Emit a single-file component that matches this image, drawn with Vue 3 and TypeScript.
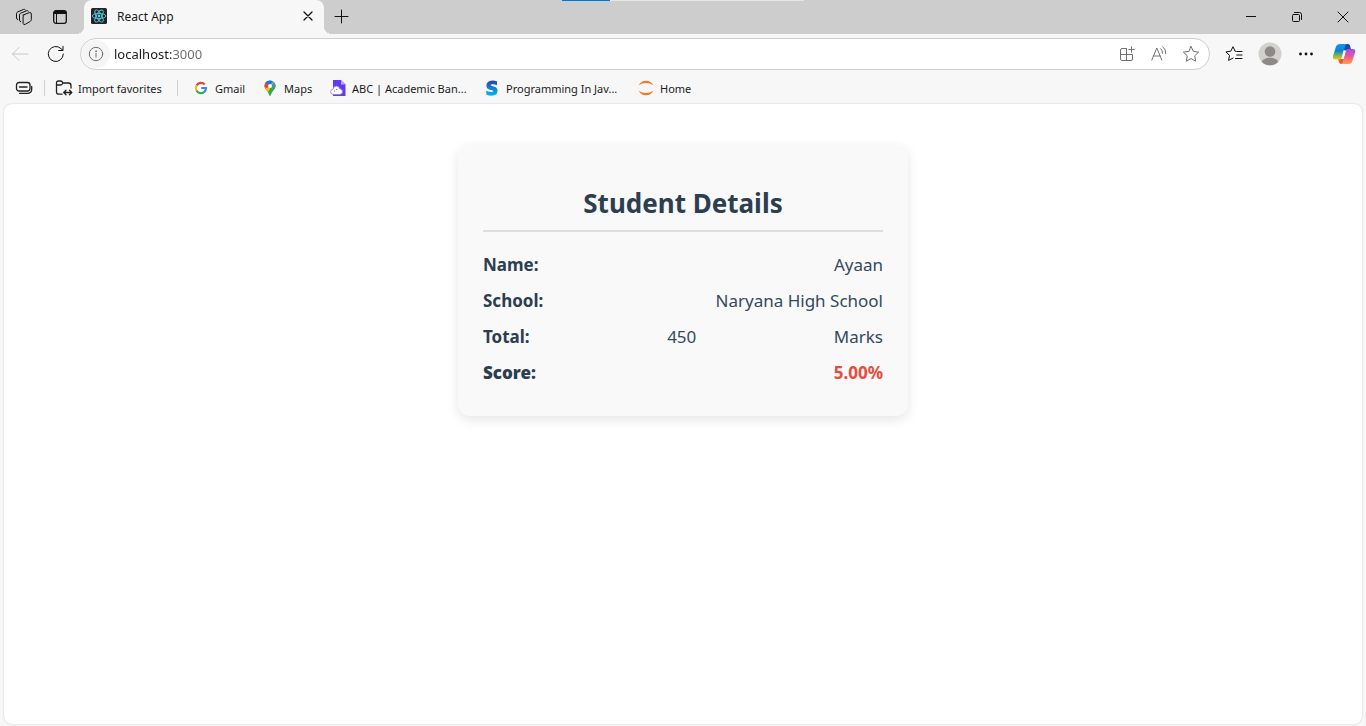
<script setup lang="ts">
import { ref } from 'vue'

interface Detail {
  label: string
  values: string[]
  score?: boolean
}

const address = ref('localhost:3000')
const details: Detail[] = [
  { label: 'Name:', values: ['Ayaan'] },
  { label: 'School:', values: ['Naryana High School'] },
  { label: 'Total:', values: ['450', 'Marks'] },
  { label: 'Score:', values: ['5.00%'], score: true },
]
</script>

<template>
  <div class="browser">
    <header class="tabstrip">
      <div class="loader" role="progressbar" aria-label="Loading"><span></span></div>
      <button class="tool" aria-label="Workspaces">
        <svg width="18" height="18" viewBox="0 0 18 18" class="line dark">
          <path d="M7.9 7.1 14.4 4.6q1.9-.5 1.9 1.4v5.6q0 1.2-1 1.8l-5 2.9q-1.9.9-2.2-.9V8.8q0-1.200 1-1.700" />
          <path d="M5.700 13.700q-1.100-.1-1.200-1.500V7.100q0-1.300 1.100-1.900l6.200-2.500q1-.3 1.500.4" />
          <path d="M2.700 11.500q-1.100-.2-1.200-1.400V5.700q0-1.200 1-1.700L8.600 1.400q1-.4 1.700.4" />
        </svg>
      </button>
      <button class="tool" aria-label="Tab actions">
        <svg width="16" height="16" viewBox="0 0 16 16">
          <rect x="1.700" y="1.700" width="12.600" height="12.600" rx="2.200" fill="none" stroke="#111" stroke-width="1.300" />
          <path d="M1.700 5V4q0-2.300 2.300-2.300h8q2.300 0 2.300 2.300v1z" fill="#111" />
          <path d="M4.500 5v9" stroke="#111" stroke-width="1" />
        </svg>
      </button>
      <div class="tab">
        <svg width="16" height="16" viewBox="0 0 16 16">
          <rect width="16" height="16" rx="1.500" fill="#222426" />
          <g fill="none" stroke="#58c4dc" stroke-width=".9">
            <ellipse cx="8" cy="8" rx="6.800" ry="2.600" />
            <ellipse cx="8" cy="8" rx="6.800" ry="2.600" transform="rotate(60 8 8)" />
            <ellipse cx="8" cy="8" rx="6.800" ry="2.600" transform="rotate(120 8 8)" />
          </g>
          <circle cx="8" cy="8" r="1.400" fill="#58c4dc" />
        </svg>
        <span class="tab-title">React App</span>
        <button class="close" aria-label="Close tab">
          <svg width="10" height="10" viewBox="0 0 10 10" class="line dark cross"><path d="m1 1 8 8m0-8-8 8" /></svg>
        </button>
      </div>
      <button class="tool" aria-label="New tab">
        <svg width="16" height="16" viewBox="0 0 16 16" class="line dark"><path d="M7.500 1v13M1 7.500h13" /></svg>
      </button>
      <div class="window-buttons">
        <button aria-label="Minimize">
          <svg width="10" height="10" viewBox="0 0 10 10" class="line dark"><path d="M0 4.500h10" /></svg>
        </button>
        <button aria-label="Restore">
          <svg width="12" height="12" viewBox="0 0 12 12" class="line dark">
            <rect x="1.500" y="3.500" width="7" height="7" rx="1" />
            <path d="M3.500 1.500h5q2 0 2 2v5" />
          </svg>
        </button>
        <button aria-label="Close">
          <svg width="12" height="12" viewBox="0 0 12 12" class="line dark"><path d="m1 1 10 10m0-10L1 11" /></svg>
        </button>
      </div>
    </header>

    <div class="toolbar">
      <button class="tool" aria-label="Back">
        <svg width="18" height="16" viewBox="0 0 18 16" class="line faint"><path d="M17 8H1.500m6.500-6.500L1.500 8 8 14.500" /></svg>
      </button>
      <button class="tool" aria-label="Refresh">
        <svg width="18" height="18" viewBox="0 0 18 18" class="line dark"><path d="M16.300 9A7.500 7.500 0 1 1 14 3.600l1.800 1.700M16 1.300v4.200h-4.300" /></svg>
      </button>
      <div class="address">
        <button class="info" aria-label="View site information">
          <svg width="16" height="16" viewBox="0 0 16 16" class="line gray">
            <circle cx="8" cy="8" r="6.700" />
            <path d="M8 7.200v4" />
            <circle cx="8" cy="5.200" r=".4" />
          </svg>
        </button>
        <input v-model="address" type="text" aria-label="Address and search bar" spellcheck="false" />
        <button class="action" aria-label="Apps">
          <svg width="16" height="16" viewBox="0 0 16 16" class="line gray">
            <path d="M7.500 2.500H3q-1.500 0-1.500 1.500v9Q1.500 14.500 3 14.500h9q1.500 0 1.500-1.500V8.500h-12M7.500 2.500v12M12.500 .8v5.400M9.800 3.500h5.400" />
          </svg>
        </button>
        <button class="action" aria-label="Read aloud">
          <svg width="16" height="16" viewBox="0 0 16 16" class="line gray">
            <path d="M.8 14 5.800 2 10.800 14M2.600 10h6.400M9.800 2.800q1.900 1.700 1.700 4.500M11.800.8q3.500 2.700 3 7" />
          </svg>
        </button>
        <button class="action" aria-label="Add to favorites">
          <svg width="18" height="18" viewBox="0 0 18 18" class="line gray">
            <path d="m9 1.500 2.300 4.900 5.300.7-3.900 3.700 1 5.400L9 13.600l-4.700 2.600 1-5.400-3.900-3.700 5.300-.7z" />
          </svg>
        </button>
      </div>
      <button class="tool" aria-label="Favorites">
        <svg width="18" height="18" viewBox="0 0 18 18" class="line dark">
          <path d="M11.700 6.500H17M11.700 10H17M10.500 13.500H17M9.800 5.500 8 1.700 5.800 6.200l-4.900.7L4.500 10.400l-.9 5 4.400-2.300M9.800 5.500l.6 1" />
        </svg>
      </button>
      <button class="tool" aria-label="Profile">
        <svg width="24" height="24" viewBox="0 0 24 24">
          <defs><clipPath id="avatar"><circle cx="12" cy="12" r="11.300" /></clipPath></defs>
          <circle cx="12" cy="12" r="11.500" fill="#d3d1ce" />
          <g fill="#8d8985" clip-path="url(#avatar)">
            <circle cx="12" cy="9.500" r="5.300" />
            <ellipse cx="12" cy="20.500" rx="8.300" ry="4.700" />
          </g>
        </svg>
      </button>
      <button class="tool" aria-label="Settings and more">
        <svg width="14" height="4" viewBox="0 0 14 4" fill="#111">
          <circle cx="1.500" cy="2" r="1.400" /><circle cx="7" cy="2" r="1.400" /><circle cx="12.500" cy="2" r="1.400" />
        </svg>
      </button>
      <button class="tool copilot" aria-label="Copilot">
        <svg width="24" height="22" viewBox="0 0 24 22">
          <defs>
            <linearGradient id="cool" x1="0" y1="0" x2="0" y2="1">
              <stop offset="0" stop-color="#1497ee" /><stop offset=".45" stop-color="#0f83d3" />
              <stop offset=".7" stop-color="#65b85a" /><stop offset="1" stop-color="#f2c512" />
            </linearGradient>
            <linearGradient id="warm" x1="0" y1="0" x2="0" y2="1">
              <stop offset="0" stop-color="#a04bea" /><stop offset=".5" stop-color="#ed5a91" />
              <stop offset="1" stop-color="#ffa245" />
            </linearGradient>
          </defs>
          <path d="M13 1h3q1.500 0 2 1.500l1 4h-3q-2 0-3 2L11 5z" fill="#1746b5" />
          <path d="M6 16h6l-1 4q-.5 1-2 1-1.500 0-2-2z" fill="#ee5631" />
          <path d="M7.500 1H15q-1.500.5-2 2.500L10.200 14q-.7 2.500-3 2.500H3.500Q.3 16.500 1 13L4 3.500Q4.800 1 7.500 1z" fill="url(#cool)" />
          <path d="M16.500 6h4Q24 6 23.200 9l-3 9.500Q19.500 21 17 21H9q1.500-.5 2-2.500L13.800 8q.6-2 2.700-2z" fill="url(#warm)" />
          <path d="M11.500 7.500h2.300L11.300 16H9.500z" fill="#f7f7f7" />
        </svg>
      </button>
    </div>

    <nav class="bookmarks" aria-label="Favorites bar">
      <button class="tool" aria-label="Saved tabs">
        <svg width="18" height="14" viewBox="0 0 18 14" class="line bold">
          <rect x="1.500" y="1.500" width="13.500" height="8.500" rx="2.500" />
          <path d="M4.500 6H12M4.500 12.300H13q3.700-.2 3.700-4V5.500" />
        </svg>
      </button>
      <span class="rule"></span>
      <a class="bookmark import" href="#import">
        <svg width="18" height="16" viewBox="0 0 18 16" class="line bold">
          <path d="M7 14.200H4Q1.500 14.200 1.500 12V3Q1.500 1 3.500 1h2.200Q7 1 8 3h5.500q2.500 0 2.500 2.500V8M1.500 5h4.200Q7 5 8 3M9 12.500h7.500M11 10.200l-2.300 2.300 2.300 2.300M14.500 10.200l2.300 2.300-2.300 2.300" />
        </svg>
        Import favorites
      </a>
      <span class="rule"></span>
      <div class="links">
        <a class="bookmark" href="#gmail">
          <svg width="16" height="16" viewBox="0 0 16 16">
            <circle cx="8" cy="8" r="8" fill="#fff" />
            <g fill="none" stroke-width="2.200">
              <path d="M3.500 5.500A5 5 0 0 1 11.700 4.500" stroke="#ea4335" />
              <path d="M3.500 5.500a5.200 5.200 0 0 0 0 5" stroke="#fbbc05" />
              <path d="M3.500 10.500a5 5 0 0 0 8 1.300" stroke="#34a853" />
              <path d="M8.200 8H13q0 2.400-1.700 4" stroke="#4285f4" />
            </g>
          </svg>
          Gmail
        </a>
        <a class="bookmark" href="#maps">
          <svg width="16" height="16" viewBox="0 0 16 16">
            <defs><clipPath id="pin"><path d="M8 .5a5.500 5.500 0 0 1 5.500 5.500c0 3-3.500 4.500-4.500 8.500Q8.700 15.800 8 15.800T7 14.500C6 10.500 2.500 9 2.500 6A5.500 5.500 0 0 1 8 .5z" /></clipPath></defs>
            <g clip-path="url(#pin)">
              <path d="M0 0h16v16H0z" fill="#34a853" />
              <path d="M0 11 14 0h2v4L6 13z" fill="#fbbc04" />
              <path d="M8 6 14 0h2v6L8 12z" fill="#4a8cf0" />
              <path d="M8 6 11 0H0l4 4z" fill="#1a73e8" />
              <path d="M4 2.500 8 6 4.500 10 0 8V4z" fill="#ea4335" />
              <path d="M2 7.500 5 8l3-2v4l-3 3z" fill="#fbbc04" />
              <path d="M8 9 13.500 4v5L8 16 6 12z" fill="#34a853" />
            </g>
            <circle cx="8" cy="6" r="2" fill="#fff" />
          </svg>
          Maps
        </a>
        <a class="bookmark" href="#abc">
          <svg width="16" height="16" viewBox="0 0 16 16">
            <path d="M3 0h8l4.500 4.500V16H3z" fill="#623bed" />
            <path d="m11 0 4.500 4.500H11z" fill="#b8a6fa" />
            <path d="M3.500 14.500Q.6 14.300.6 11.800.7 9.500 3 9.200 3.400 6 6.500 6q2.700.1 3.300 2.800 2.700.2 2.700 2.900-.1 2.700-3 2.800z" fill="#fff" stroke="#8e75f3" stroke-width=".8" />
            <path d="M4.500 11.500v-1M6.500 10V9" fill="none" stroke="#623bed" stroke-width=".8" />
          </svg>
          ABC | Academic Ban...
        </a>
        <a class="bookmark" href="#programming">
          <svg width="16" height="16" viewBox="0 0 16 16">
            <defs><linearGradient id="wave" x1="0" y1="0" x2="0" y2="1"><stop offset="0" stop-color="#2547a5" /><stop offset="1" stop-color="#00b8f0" /></linearGradient></defs>
            <path d="M13 1.500v3.700Q10.500 4 8 4.200q-2 .3-1 1.300.6.500 2.500.9 4 .9 4 4.300 0 4.800-6 5-3 0-5.200-1.200v-3.800Q5 12.200 8 12.100q2-.3 1-1.300Q8.500 10.300 6.500 10 2.300 9 2.400 5.500 2.500.6 8.500.4q2.500 0 4.500 1.100z" fill="url(#wave)" />
          </svg>
          Programming In Jav...
        </a>
        <a class="bookmark" href="#home">
          <svg width="16" height="16" viewBox="0 0 16 16" fill="#f37726">
            <path d="M.8 5.200Q3 .7 8 .7t7.200 4.500Q12.200 2.900 8 2.900T.8 5.200zM.8 10.800Q3 15.300 8 15.300t7.200-4.500Q12.200 13.100 8 13.100T.8 10.800z" />
          </svg>
          Home
        </a>
      </div>
    </nav>

    <main class="page">
      <section class="card">
        <h1>Student Details</h1>
        <dl>
          <div v-for="detail in details" :key="detail.label" class="row" :class="{ score: detail.score }">
            <dt>{{ detail.label }}</dt>
            <dd v-for="value in detail.values" :key="value">{{ value }}</dd>
          </div>
        </dl>
      </section>
    </main>
  </div>
</template>

<style>
body {
  margin: 0;
  background: #f7f7f7;
}
</style>

<style scoped>
.browser {
  display: flex;
  flex-direction: column;
  box-sizing: border-box;
  min-height: 100vh;
  padding-bottom: 2px;
  background: #f7f7f7;
  color: #1b1b1b;
  font-family: "Noto Sans", "Open Sans", sans-serif;
  font-size: 12px;
}

button {
  display: flex;
  align-items: center;
  justify-content: center;
  padding: 0;
  border: 0;
  background: none;
}

svg {
  display: block;
  flex: none;
}

.line {
  fill: none;
  stroke-width: 1;
  stroke-linecap: round;
  stroke-linejoin: round;
}

.dark { stroke: #111; }
.bold { stroke: #222; stroke-width: 1.3; }
.cross { stroke-width: 1.3; }
.gray { stroke: #707070; }
.faint { stroke: #c9c9c9; }

.tool {
  flex: none;
  width: 36px;
  height: 32px;
}

.tabstrip {
  position: relative;
  display: flex;
  align-items: center;
  height: 34px;
  padding-left: 6px;
  background: #cdcdcd;
}

.loader {
  position: absolute;
  top: 0;
  left: 50%;
  width: 242px;
  height: 1px;
  transform: translateX(-50%);
  background: #e6e6e6;
}

.loader span {
  display: block;
  width: 20%;
  height: 1px;
  background: #0078d4;
}

.tab {
  position: relative;
  display: flex;
  align-items: center;
  box-sizing: border-box;
  width: 240px;
  height: 34px;
  margin-left: 6px;
  padding: 0 6px 2px 7px;
  border-radius: 8px 8px 0 0;
  background: #f7f7f7;
}

.tab::before,
.tab::after {
  content: "";
  position: absolute;
  bottom: 0;
  width: 8px;
  height: 8px;
}

.tab::before {
  right: 100%;
  background: radial-gradient(circle at 0 0, #cdcdcd 8px, #f7f7f7 8px);
}

.tab::after {
  left: 100%;
  background: radial-gradient(circle at 100% 0, #cdcdcd 8px, #f7f7f7 8px);
}

.tab-title {
  flex: 1;
  margin-left: 10px;
}

.close {
  width: 20px;
  height: 20px;
}

.window-buttons {
  display: flex;
  margin-left: auto;
}

.window-buttons button {
  width: 46px;
  height: 34px;
}

.toolbar {
  display: flex;
  align-items: center;
  height: 40px;
  padding: 0 4px 0 2px;
}

.address {
  display: flex;
  flex: 1;
  align-items: center;
  box-sizing: border-box;
  height: 32px;
  margin: 0 6px;
  padding: 0 2px 0 1px;
  border: 1px solid #cecece;
  border-radius: 16px;
  background: #fff;
}

.info {
  width: 28px;
  height: 28px;
  border-radius: 50%;
  background: #f5f5f5;
}

.address input {
  flex: 1;
  min-width: 0;
  height: 28px;
  margin-left: 4px;
  padding: 0;
  border: 0;
  outline: 0;
  background: linear-gradient(90deg, #1b1b1b 57px, #6b6b6b 57px);
  background-clip: text;
  color: transparent;
  font: inherit;
  font-size: 13px;
}

.action {
  width: 32px;
  height: 28px;
}

.copilot {
  margin-left: 2px;
}

.bookmarks {
  display: flex;
  align-items: center;
  box-sizing: border-box;
  height: 30px;
  padding: 0 6px 2px;
  font-size: 11px;
}

.rule {
  width: 1px;
  height: 16px;
  margin: 0 10px 0 2px;
  background: #d0d0d0;
}

.bookmark {
  display: flex;
  align-items: center;
  gap: 6px;
  color: inherit;
  text-decoration: none;
  white-space: nowrap;
}

.import {
  width: 120px;
  gap: 5px;
}

.links {
  display: grid;
  grid-template-columns: 69px 68px 154px 154px auto;
  margin-left: 5px;
}

.page {
  flex: 1;
  margin: 0 4px;
  padding: 40px 16px;
  border-radius: 8px;
  background: #fff;
  box-shadow: 0 0 2px #0003;
}

.card {
  box-sizing: border-box;
  max-width: 450px;
  margin: 0 auto;
  padding: 40px 25px 25px;
  border-radius: 12px;
  background: #f9f9f9;
  box-shadow: 0 4px 12px #0000001a;
  color: #2c3e50;
  font-size: 17px;
}

h1 {
  margin: 0 0 15px;
  padding-bottom: 8px;
  border-bottom: 2px solid #ddd;
  font-size: 26px;
  line-height: 38px;
  text-align: center;
}

dl {
  margin: 0;
}

.row {
  display: flex;
  justify-content: space-between;
  padding: 6px 0;
  line-height: 24px;
}

dt {
  font-weight: 700;
}

dd {
  margin: 0;
  color: #34495e;
}

.score dt {
  font-weight: 900;
}

.score dd {
  color: #e74c3c;
  font-weight: 700;
}
</style>
